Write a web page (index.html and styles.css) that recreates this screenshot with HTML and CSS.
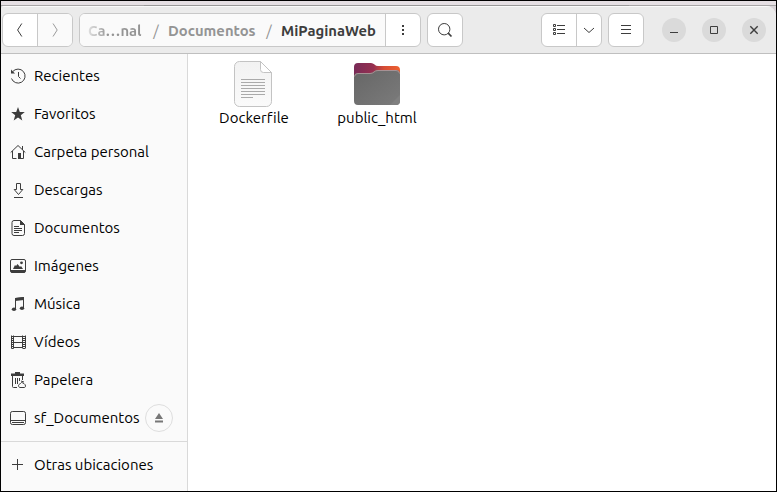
FILE: index.html
```html
<!DOCTYPE html>
<html lang="es">
<head>
<meta charset="utf-8">
<title>MiPaginaWeb</title>
<link rel="stylesheet" href="styles.css">
</head>
<body>
<div class="screen">
  <div class="backdrop"><div class="backdrop-edge"></div></div>
  <div class="window">
    <header class="header">
      <div class="group nav">
        <button class="btn back"><svg width="16" height="16" viewBox="0 0 16 16"><path d="M9.8 1.5 5.6 8l4.2 6.500"/></svg></button>
        <button class="btn forward"><svg width="16" height="16" viewBox="0 0 16 16"><path d="M6 1.500 10.200 8 6 14.500"/></svg></button>
      </div>
      <div class="group path">
        <div class="crumbs"><span class="crumb faded">Ca…nal</span><span class="slash">/</span><span class="crumb docs">Documentos</span><span class="slash">/</span><span class="crumb current">MiPaginaWeb</span></div>
        <button class="btn more"><svg width="16" height="16" viewBox="0 0 16 16"><path class="solid" d="M7 3h2v2H7zM7 7h2v2H7zM7 11h2v2H7z"/></svg></button>
      </div>
      <div class="group search"><button class="btn"><svg width="16" height="16" viewBox="0 0 16 16"><circle cx="7.200" cy="7.200" r="5.700"/><path d="m11.200 11.200 3.300 3.300" stroke-width="1.700"/></svg></button></div>
      <div class="group view">
        <button class="btn list"><svg width="16" height="16" viewBox="0 0 16 16"><path d="M2.500 2.500h2v2h-2zM2.500 6.500h2v2h-2zM2.500 10.500h2v2h-2zM6 3.500h8M6 7.500h8M6 11.500h8"/></svg></button>
        <button class="btn drop"><svg width="16" height="16" viewBox="0 0 16 16"><path d="m3 6 5 4.500L13 6"/></svg></button>
      </div>
      <div class="group menu"><button class="btn"><svg width="16" height="16" viewBox="0 0 16 16"><path d="M3 3.500h10M3 7.500h10M3 11.500h10"/></svg></button></div>
      <div class="controls">
        <button class="round"><svg width="16" height="16" viewBox="0 0 16 16"><path d="M4 10.500h8"/></svg></button>
        <button class="round"><svg width="16" height="16" viewBox="0 0 16 16"><path d="M4.500 4.500h7v7h-7z"/></svg></button>
        <button class="round"><svg width="16" height="16" viewBox="0 0 16 16"><path d="m4.300 4.300 7.400 7.400m0-7.400-7.400 7.400" stroke-width="1.400"/></svg></button>
      </div>
    </header>
    <div class="body">
      <nav class="sidebar">
        <a class="place recent"><svg width="16" height="16" viewBox="0 0 16 16"><path d="M2.700 3.600A7 7 0 1 1 1.500 10.500M8.500 4v4.500l2 2"/><path class="solid" d="M1 1.500V5.500H5z"/></svg><span>Recientes</span></a>
        <a class="place starred"><svg width="16" height="16" viewBox="0 0 16 16"><path class="solid" d="m8 1 1.800 4.900 5 .2-4 3.100 1.500 5.300L8 11.500l-4.300 3 1.500-5.300-4-3.100 5-.2z"/></svg><span>Favoritos</span></a>
        <a class="place home"><svg width="16" height="16" viewBox="0 0 16 16"><path d="M.7 8.500 8 1.500l7.300 7M2.500 7v7.500h4M13.500 7v7.500h-3M12.500 2v4"/><path class="solid" d="M8 9h3v6H8z"/></svg><span>Carpeta personal</span></a>
        <a class="place downloads"><svg width="16" height="16" viewBox="0 0 16 16"><path d="M6.500 1.500h4v6h2.300L8.500 12.500 4.200 7.500h2.300zM4 15.500h9"/></svg><span>Descargas</span></a>
        <a class="place documents"><svg width="16" height="16" viewBox="0 0 16 16"><path d="M4 .5h6.500l4 4v9a2 2 0 0 1-2 2H4a2 2 0 0 1-2-2v-11a2 2 0 0 1 2-2zM4 6.500h5M4 8.500h8M4 10.500h8M4 12.500h5"/><path class="solid" d="M10 0v5h5z"/></svg><span>Documentos</span></a>
        <a class="place pictures"><svg width="16" height="16" viewBox="0 0 16 16"><rect x=".5" y="1.500" width="15" height="13" rx="1.500"/><path class="solid" d="M1 12h14v2.500H1zM3 11l2-4 1 1 1.500-2L10 9l1-1 2 3z"/><circle class="solid" cx="11.500" cy="4.800" r="1.400"/></svg><span>Imágenes</span></a>
        <a class="place music"><svg width="16" height="16" viewBox="0 0 16 16"><path d="M5.500 13V2.500l8-1V12"/><path class="solid" d="M5 2l9-1v3L5 5z"/><ellipse class="solid" cx="4" cy="13.200" rx="2.200" ry="1.800"/><ellipse class="solid" cx="12" cy="12.200" rx="2.200" ry="1.800"/></svg><span>Música</span></a>
        <a class="place videos"><svg width="16" height="16" viewBox="0 0 16 16"><path d="M1.500 1.500v13M3.500 1.500v13M12.500 1.500v13M15.500 1.500v13M3.500 2.500h9M3.500 8.500h9M3.500 13.500h9"/><path d="M2.500 2v13M14 2v13" stroke-width="2" stroke-dasharray="1 1"/></svg><span>Vídeos</span></a>
        <a class="place trash"><svg width="16" height="16" viewBox="0 0 16 16"><path class="solid" d="M5 0h5v1.500h4V4H1V1.500h4z"/><path d="M2.500 4v10.500a1 1 0 0 0 1 1H7M12.500 4v4M5.500 6v6M7.500 6v6M9.500 6v3M11 9l3 1M8.500 13.500c0-1.300 2-1.500 3-3 1.500.3 4 1.500 4 3.500 0 1-.5 1.500-1.500 1.500h-4c-1 0-1.500-1-1.500-2z"/></svg><span>Papelera</span></a>
        <a class="place mount"><svg width="16" height="16" viewBox="0 0 16 16"><rect x=".5" y="1.500" width="15" height="13" rx="1.800"/><path d="M1 10.500h14M2 12.500h12"/></svg><span>sf_Documentos</span><button class="eject"><svg width="16" height="16" viewBox="0 0 16 16"><path class="solid" d="M8 3l4 6H4zM4 10.500h8v2H4z"/></svg></button></a>
        <a class="place other"><svg width="16" height="16" viewBox="0 0 16 16"><path d="M7.500 2v11M2 7.500h11"/></svg><span>Otras ubicaciones</span></a>
      </nav>
      <main class="files">
        <div class="file dockerfile">
          <svg width="48" height="48" viewBox="0 0 48 48"><defs><linearGradient id="paper" x2="0" y2="1"><stop stop-color="#f2f2f2"/><stop offset="1" stop-color="#fafafa"/></linearGradient></defs><path d="M9.500 1.500h21l11 11v29a5 5 0 0 1-5 5h-27a5 5 0 0 1-5-5v-35a5 5 0 0 1 5-5z" fill="url(#paper)" stroke="#c3c3c3"/><path d="M30.500 1.500v8q0 3 3 3h8z" fill="#fff" stroke="#c3c3c3"/><path d="M11 19.500h24M11 22.500h24M11 25.500h24M11 28.500h24M11 31.500h24M11 34.500h24M11 37.500h12" stroke="#aaa"/></svg>
          <span>Dockerfile</span>
        </div>
        <div class="file folder">
          <svg width="48" height="48" viewBox="0 0 48 48"><defs><linearGradient id="tab"><stop stop-color="#782b57"/><stop offset=".42" stop-color="#963050"/><stop offset=".65" stop-color="#d64c35"/><stop offset="1" stop-color="#ee6130"/></linearGradient><linearGradient id="front" x2="1" y2="1"><stop stop-color="#666"/><stop offset="1" stop-color="#7b7b7b"/></linearGradient></defs><g stroke="none"><path d="M1 7a4 4 0 0 1 4-4h13q2 0 3.500 1.500T25 6h18a4 4 0 0 1 4 4v10H1z" fill="url(#tab)"/><path d="M1 17a4 4 0 0 1 4-4h12q2.500 0 4-1.500t4-1.500h18a4 4 0 0 1 4 4v27a4 4 0 0 1-4 4H5a4 4 0 0 1-4-4z" fill="url(#front)"/><path d="M47 35v6a4 4 0 0 1-4 4h-6z" fill="#808080"/></g><path d="M1.500 16.500a3.500 3.500 0 0 1 3.500-3h12q2.500 0 4-1.500t4-1.500h18a3.500 3.500 0 0 1 3.500 3" fill="none" stroke="#a79194"/></svg>
          <span>public_html</span>
        </div>
      </main>
    </div>
  </div>
</div>
</body>
</html>
```

FILE: styles.css
```css
* { box-sizing: border-box; }
body {
  margin: 0;
  font-family: Ubuntu, "Noto Sans", sans-serif;
  font-size: 15px;
  font-variant-ligatures: none;
  color: #000;
}
svg { display: block; flex: none; fill: none; stroke: #3d3d3d; stroke-width: 1; }
svg .solid { fill: #3d3d3d; stroke: none; }
button { margin: 0; padding: 0; border: 0; font: inherit; }
.screen {
  width: 777px;
  height: 492px;
  border: 1px solid #000;
  display: flex;
  flex-direction: column;
  background: #d9d4d8;
  overflow: hidden;
}
.backdrop { height: 5px; background: #e5dfe3; border-bottom: 1px solid #a8a6a7; flex: none; }
.backdrop-edge { width: 485px; height: 5px; margin-left: 143px; border-bottom: 1px solid #999; }
.window {
  flex: 1;
  display: flex;
  flex-direction: column;
  background: #fff;
  border-radius: 4px 10px 0 0;
  overflow: hidden;
}
.header {
  height: 48px;
  flex: none;
  display: flex;
  align-items: flex-start;
  padding: 6px 10px 0 1px;
  background: #ebebeb;
  border-top: 1px solid #fafafa;
  border-bottom: 1px solid #bfbfbf;
}
.group {
  display: flex;
  height: 34px;
  border: 1px solid #c8c8c8;
  border-radius: 6px;
  background: #fff;
  overflow: hidden;
}
.btn { flex: 1; display: flex; align-items: center; justify-content: center; background: none; }
.nav { width: 71px; margin-right: 6px; }
.forward { background: #fafafa; border-left: 1px solid #c8c8c8; }
.forward svg { stroke: #9a9a9a; }
.path { width: 342px; margin-right: 6px; }
.crumbs {
  width: 305px;
  flex: none;
  display: flex;
  align-items: center;
  padding-left: 8px;
  background: #fafafa;
  font-size: 14.8px;
  font-weight: 700;
  color: #949494;
  white-space: nowrap;
}
.crumb.faded {
  width: 56px;
  background: linear-gradient(90deg, #e0e0e0, #949494 20px);
  background-clip: text;
  color: transparent;
}
.slash { width: 24px; text-align: center; font-weight: 400; }
.docs { width: 89px; }
.current { color: #3d3d3d; }
.more { border-left: 1px solid #c8c8c8; }
.search { width: 36px; }
.view { width: 61px; margin-left: auto; margin-right: 6px; }
.list { flex: none; width: 34px; }
.drop { border-left: 1px solid #c8c8c8; }
.menu { width: 36px; margin-right: 18px; }
.controls { display: flex; gap: 16px; padding-top: 5px; }
.round {
  width: 24px;
  height: 24px;
  border-radius: 50%;
  background: #dadada;
  display: flex;
  align-items: center;
  justify-content: center;
}
.body { flex: 1; display: flex; min-height: 0; }
.sidebar { width: 187px; padding-top: 3px; background: #fafafa; border-right: 1px solid #d9d9d9; }
.place { display: flex; align-items: center; height: 38px; padding-left: 9px; gap: 8px; white-space: nowrap; }
.place span { padding-bottom: 2px; }
.mount { position: relative; }
.eject {
  position: absolute;
  left: 144px;
  top: 5px;
  width: 28px;
  height: 28px;
  border: 1px solid #dedede;
  border-radius: 50%;
  background: none;
  display: flex;
  align-items: center;
  justify-content: center;
}
.eject .solid { fill: #777; }
.other { margin-top: 4px; padding-top: 4px; height: 42px; border-top: 1px solid #d9d9d9; }
.place.other span { padding-bottom: 0; }
.files { flex: 1; display: flex; padding: 6px 0 0 4px; }
.file { width: 124px; display: flex; flex-direction: column; align-items: center; }
.folder { width: 122px; }
.file span { line-height: 20px; }
```
